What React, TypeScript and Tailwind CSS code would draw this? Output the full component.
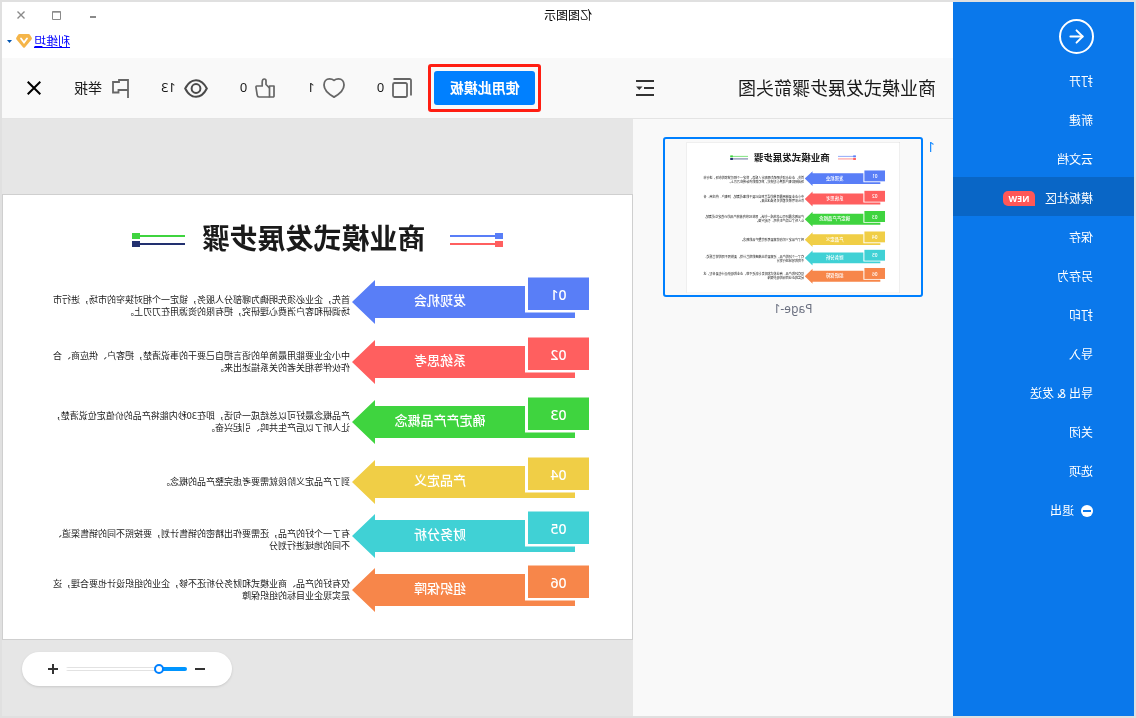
import { useState } from 'react';
import { ArrowLeft } from 'lucide-react';

interface Step {
  no: string;
  label: string;
  lines: string[];
  color: string;
  spacing: string;
  textClass?: string;
}

const steps: Step[] = [
  {
    no: '01',
    label: '发现机会',
    lines: ['首先\uff0c企业必须先明确为哪部分人服务\uff0c锁定一个相对狭窄的市场\uff0c进行市', '场调研和客户消费心理研究\uff0c把有限的资源用在刀刃上。'],
    color: 'text-[#597ef7]',
    spacing: '',
    textClass: 'pt-2.5',
  },
  {
    no: '02',
    label: '系统思考',
    lines: ['中小企业要能用最简单的语言把自己要干的事说清楚\uff0c把客户、供应商、合', '作伙伴等相关者的关系描述出来。'],
    color: 'text-[#ff5f5f]',
    spacing: 'mt-3',
  },
  {
    no: '03',
    label: '确定产产品概念',
    lines: ['产品概念最好可以总结成一句话\uff0c即在30秒内能将产品的价值定位说清楚\uff0c', '让人听了以后产生共鸣、引起兴奋。'],
    color: 'text-[#3fd43f]',
    spacing: 'mt-3',
  },
  {
    no: '04',
    label: '产品定义',
    lines: ['到了产品定义阶段就需要考虑完整产品的概念。'],
    color: 'text-[#f0ce46]',
    spacing: 'mt-3',
  },
  {
    no: '05',
    label: '财务分析',
    lines: ['有了一个好的产品\uff0c还需要作出精密的销售计划\uff0c要按照不同的销售渠道、', '不同的地域进行划分'],
    color: 'text-[#40d1d5]',
    spacing: 'mt-1.5',
    textClass: 'pt-2.5',
  },
  {
    no: '06',
    label: '组织保障',
    lines: ['仅有好的产品、商业模式和财务分析还不够\uff0c企业的组织设计也要合理\uff0c这', '是实现企业目标的组织保障'],
    color: 'text-[#f7864a]',
    spacing: 'mt-1.5',
  },
];

const menu = ['打开', '新建', '云文档', '模板社区', '保存', '另存为', '打印', '导入', '导出 & 发送', '关闭', '选项', '退出'];

function CopyIcon() {
  return (
    <svg width="20" height="20" viewBox="0 0 20 20" fill="none" stroke="#666" strokeWidth="1.8">
      <rect x="5" y="5" width="14" height="14" rx="1.5" />
      <path d="M1 17.5V2.5Q1 1 2.5 1H18.5" />
    </svg>
  );
}

function HeartIcon() {
  return (
    <svg width="22" height="20" viewBox="0 0 22 20" fill="none" stroke="#666" strokeWidth="1.8" strokeLinejoin="round">
      <path d="M11 2.4C12.4 1.2 14 .9 15.5 .9C18.8 .9 21 3.6 21 7C21 12 16.5 16 11 19.1C5.5 16 1 12 1 7C1 3.6 3.2 .9 6.5 .9C8 .9 9.6 1.2 11 2.4Z" />
    </svg>
  );
}

function ThumbIcon() {
  return (
    <svg width="20" height="20" viewBox="0 0 20 20" fill="none" stroke="#666" strokeWidth="1.7" strokeLinejoin="round">
      <path d="M1 8H5.5V19H2Q1 19 1 18Z" />
      <path d="M5.5 10L9 6.5V3Q9 1 10.7 1Q12.8 1 12.8 4V8H18.2Q19.2 8 19 9.5L17.8 17.2Q17.5 19 16 19H5.5" />
    </svg>
  );
}

function EyeIcon() {
  return (
    <svg width="24" height="19" viewBox="0 0 24 19" fill="none" stroke="#4a4a4a" strokeWidth="2">
      <path d="M1.2 9.5C4 4 7.6 1.2 12 1.2S20 4 22.8 9.5C20 15 16.4 17.8 12 17.8S4 15 1.2 9.5Z" />
      <circle cx="12" cy="9.5" r="4.4" />
    </svg>
  );
}

function FlagIcon() {
  return (
    <svg width="17" height="19" viewBox="0 0 17 19" fill="none" stroke="#666" strokeWidth="1.8">
      <path d="M1 19V1H10V3H16V13.5H10.5V11H1" />
    </svg>
  );
}

function OutlineIcon() {
  return (
    <svg width="18" height="17" viewBox="0 0 18 17" fill="#333">
      <path d="M0 0H18V2H0ZM0 7H10V9H0ZM0 14H18V16H0ZM11.5 6.5H18L14.75 10Z" />
    </svg>
  );
}

// Pair of coloured rules shown on both sides of the slide heading
function HeadingRules({ top, bottom, squareX }: { top: string; bottom: string; squareX: number }) {
  return (
    <svg width="53" height="14" viewBox="0 0 53 14" className="shrink-0">
      <rect y="2" width="53" height="2" fill={top} />
      <rect x={squareX} width="8" height="6" fill={top} />
      <rect y="10" width="53" height="2" fill={bottom} />
      <rect x={squareX} y="8" width="8" height="6" fill={bottom} />
    </svg>
  );
}

function StepRow({ step }: { step: Step }) {
  return (
    <div className={`flex h-12 ${step.spacing}`}>
      <div className={`relative flex w-[237px] shrink-0 ${step.color}`}>
        <svg viewBox="0 0 237 48" className="absolute inset-0 h-12 w-[237px]" fill="currentColor">
          <rect y=".5" width="61" height="32.5" />
          <path d="M64 9H214V3L237 25L214 47V41H14V35.5H64Z" />
        </svg>
        <span className="relative flex h-9 w-[61px] items-center justify-center text-sm font-medium text-white">{step.no}</span>
        <span className="relative flex h-12 flex-1 items-center justify-center text-[13px] font-medium text-white">{step.label}</span>
      </div>
      <div className={`ml-0.5 flex flex-col justify-center whitespace-nowrap text-[9px] leading-3 text-[#1a1a1a] ${step.textClass ?? 'pt-0.5'}`}>
        {step.lines.map(line => (
          <p key={line}>{line}</p>
        ))}
      </div>
    </div>
  );
}

function Slide() {
  return (
    <div className="border border-[#cfcfcf] bg-white pt-[25px] pb-[26px]">
      <div className="flex h-10 items-center justify-center">
        <HeadingRules top="#597ef7" bottom="#ff5f5f" squareX={0} />
        <h2 className="mr-4 ml-6 pb-1 text-[28px] leading-8 font-bold whitespace-nowrap text-[#1a1a1a]">商业模式发展步骤</h2>
        <HeadingRules top="#3fd43f" bottom="#22306f" squareX={45} />
      </div>
      <div className="mx-auto mt-[17px] w-[543px]">
        {steps.map(step => (
          <StepRow key={step.no} step={step} />
        ))}
      </div>
    </div>
  );
}

function Sidebar() {
  return (
    <nav className="w-[181px] shrink-0 bg-[#0a78eb] pt-[17px] text-xs text-white">
      <button
        aria-label="返回"
        className="ml-10 flex h-[35px] w-[35px] items-center justify-center rounded-full border-2 border-white"
      >
        <ArrowLeft size={21} strokeWidth={2.2} />
      </button>
      <ul className="mt-1.5">
        {menu.map(item => (
          <li key={item}>
            <a
              href="#"
              className={`flex h-[39px] items-center pt-1 pl-[41px] ${item === '模板社区' ? 'bg-[#0966c6]' : ''}`}
            >
              {item === '退出' && (
                <svg width="12" height="12" viewBox="0 0 12 12" className="mr-[7px]">
                  <circle cx="6" cy="6" r="6" fill="#fff" />
                  <rect x="2" y="5" width="8" height="2" fill="#0a78eb" />
                </svg>
              )}
              {item}
              {item === '模板社区' && (
                <span className="ml-2.5 flex h-[15px] w-8 items-center justify-center rounded-[5px] rounded-bl-none bg-[#ff5757] text-[9px] font-bold">
                  NEW
                </span>
              )}
            </a>
          </li>
        ))}
      </ul>
    </nav>
  );
}

function TitleBar() {
  return (
    <header className="bg-white">
      <div className="flex h-[26px] items-center">
        <h1 className="flex-1 pt-0.5 pr-[72px] text-center text-xs text-black">亿图图示</h1>
        <div className="mr-px flex h-full text-[#8a8a8a]">
          <button aria-label="最小化" className="flex w-9 items-center justify-center">
            <svg width="10" height="10" viewBox="0 0 10 10" fill="currentColor">
              <rect x="2" y="6" width="6" height="2" />
            </svg>
          </button>
          <button aria-label="最大化" className="flex w-9 items-center justify-center">
            <svg width="9" height="9" viewBox="0 0 9 9" fill="none" stroke="currentColor">
              <path d="M.5 .5H8.5V8.5H.5ZM0 1.2H9" />
            </svg>
          </button>
          <button aria-label="关闭窗口" className="flex w-9 items-center justify-center">
            <svg width="8" height="8" viewBox="0 0 8 8" fill="none" stroke="currentColor" strokeWidth="1.4">
              <path d="M.5 .5L7.5 7.5M7.5 .5L.5 7.5" />
            </svg>
          </button>
        </div>
      </div>
      <div className="flex h-[30px] items-center justify-end pr-[5px] pb-1">
        <a href="#" className="pt-0.5 text-xs text-[#0000ff] underline">
          利维坦
        </a>
        <svg width="16" height="14" viewBox="0 0 16 14" className="ml-0.5">
          <path
            d="M3.5 0H12.5Q13.3 0 13.7 .6L15.6 3.6Q16.2 4.6 15.5 5.4L9 13.3Q8 14.3 7 13.3L.5 5.4Q-.2 4.6 .4 3.6L2.3 .6Q2.7 0 3.5 0Z"
            fill="#f5b549"
          />
          <path d="M5 4.5L8 8.5L11 4.5" fill="none" stroke="#fff" strokeWidth="1.8" strokeLinecap="round" />
        </svg>
        <svg width="5" height="3" viewBox="0 0 5 3" className="ml-1">
          <path d="M0 0H5L2.5 3Z" fill="#0055b3" />
        </svg>
      </div>
    </header>
  );
}

function Toolbar() {
  return (
    <div className="flex h-[61px] items-center border-b border-[#e4e4e4] bg-[#f9f9f9] pr-[25px]">
      <div className="flex w-80 items-center justify-between pr-[3px] pl-[17px]">
        <h2 className="text-lg whitespace-nowrap text-[#1a1a1a]">商业模式发展步骤箭头图</h2>
        <button aria-label="目录">
          <OutlineIcon />
        </button>
      </div>
      <div className="ml-auto flex items-center text-[13px] text-[#1a1a1a]">
        <div className="rounded-[3px] border-3 border-[#ff1e12] px-[3px] py-1">
          <button className="h-[34px] w-[101px] rounded-[3px] bg-[#0080ff] text-sm font-bold text-white">使用此模板</button>
        </div>
        <div className="ml-4 flex items-center gap-8">
          <button className="flex items-center gap-2">
            <CopyIcon />0
          </button>
          <button className="flex items-center gap-2">
            <HeartIcon />1
          </button>
          <button className="flex items-center gap-2">
            <ThumbIcon />0
          </button>
          <span className="flex items-center gap-2">
            <EyeIcon />
            13
          </span>
          <button className="flex items-center gap-2.5 text-sm">
            <FlagIcon />
            举报
          </button>
          <button aria-label="关闭" className="ml-px">
            <svg width="14" height="14" viewBox="0 0 14 14" fill="none" stroke="#000" strokeWidth="2">
              <path d="M.7 .7L13.3 13.3M13.3 .7L.7 13.3" />
            </svg>
          </button>
        </div>
      </div>
    </div>
  );
}

function ZoomControl() {
  const [zoom, setZoom] = useState(21);

  return (
    <div className="mt-3 mr-5 mb-[30px] flex h-[34px] w-[210px] items-center justify-center gap-2 self-end rounded-full bg-white text-[#333] shadow-sm">
      <button aria-label="缩小" onClick={() => setZoom(z => Math.max(0, z - 5))}>
        <svg width="10" height="10" viewBox="0 0 10 10" fill="currentColor">
          <rect y="4" width="10" height="2" />
        </svg>
      </button>
      <input
        type="range"
        aria-label="缩放"
        min={0}
        max={100}
        value={zoom}
        onChange={e => setZoom(Number(e.target.value))}
        className="h-1 w-[121px] appearance-none rounded-full bg-no-repeat [&::-webkit-slider-thumb]:h-2.5 [&::-webkit-slider-thumb]:w-2.5 [&::-webkit-slider-thumb]:appearance-none [&::-webkit-slider-thumb]:rounded-full [&::-webkit-slider-thumb]:border-2 [&::-webkit-slider-thumb]:border-[#0080ff] [&::-webkit-slider-thumb]:bg-white"
        style={{
          backgroundImage: `linear-gradient(to right, #0095ff ${zoom}%, transparent ${zoom}%), linear-gradient(#e2e2e2 1px, #fff 1px 3px, #e2e2e2 3px)`,
        }}
      />
      <button aria-label="放大" onClick={() => setZoom(z => Math.min(100, z + 5))}>
        <svg width="10" height="10" viewBox="0 0 10 10" fill="currentColor">
          <path d="M4 0H6V4H10V6H6V10H4V6H0V4H4Z" />
        </svg>
      </button>
    </div>
  );
}

export default function App() {
  return (
    // The whole window is flipped horizontally
    <div className="flex min-h-screen -scale-x-100 border-2 border-[#e0e0e0] font-['Noto_Sans','Noto_Sans_CJK_SC',sans-serif]">
      <Sidebar />
      <main className="flex min-w-0 flex-1 flex-col">
        <TitleBar />
        <Toolbar />
        <div className="flex flex-1">
          {/* Page list */}
          <aside className="w-80 shrink-0 bg-[#f9f9f9] pt-[18px] pl-[18px]">
            <div className="flex gap-1">
              <span className="w-2 text-sm text-[#1a8cff]">1</span>
              <figure>
                <div className="flex h-40 w-[260px] items-center justify-center rounded-[3px] border-2 border-[#0080ff]">
                  <div className="h-[151px] w-[214px] overflow-hidden">
                    <div className="w-[631px] origin-top-left scale-[0.339]">
                      <Slide />
                    </div>
                  </div>
                </div>
                <figcaption className="mt-1 text-center text-xs text-[#6b7080]">Page-1</figcaption>
              </figure>
            </div>
          </aside>
          {/* Canvas */}
          <section className="flex flex-1 flex-col bg-[#e6e6e6] pt-[75px]">
            <Slide />
            <ZoomControl />
          </section>
        </div>
      </main>
    </div>
  );
}
